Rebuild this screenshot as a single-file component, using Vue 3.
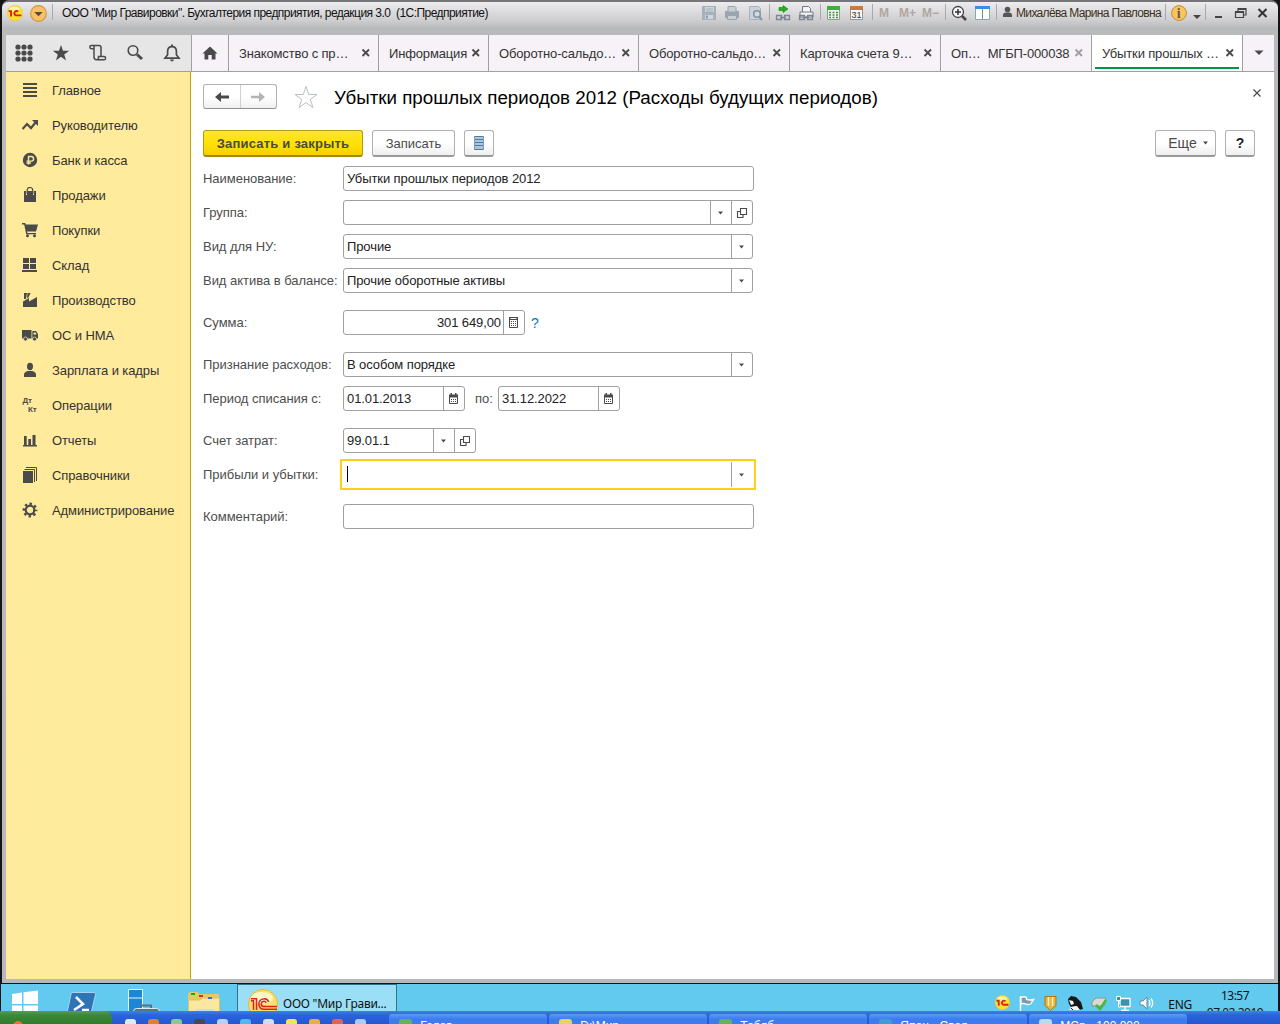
<script setup>
import { ref } from 'vue'

const icons = {
  apps: '<g fill="#4a4a4a"><circle cx="3" cy="3" r="2.6"/><circle cx="9" cy="3" r="2.6"/><circle cx="15" cy="3" r="2.6"/><circle cx="3" cy="9" r="2.6"/><circle cx="9" cy="9" r="2.6"/><circle cx="15" cy="9" r="2.6"/><circle cx="3" cy="15" r="2.6"/><circle cx="9" cy="15" r="2.6"/><circle cx="15" cy="15" r="2.6"/></g>',
  star: '<path fill="#4a4a4a" d="M9 1l2 5.8h6.2l-5 3.6 1.9 6-5.100-3.700-5.100 3.700 1.900-6-5-3.600H7z"/>',
  scroll: '<path fill="none" stroke="#4a4a4a" stroke-width="1.5" d="M4.500 4.800H2.500a1.700 1.700 0 0 1 0-3.400H10q2 0 2 2v9M5 1.800v11q0 3 2.500 3h7.500a1.600 1.600 0 0 0 0-3.200H9.500v1.200q0 2-2 2"/>',
  search: '<circle cx="7" cy="6.500" r="4.800" fill="none" stroke="#4a4a4a" stroke-width="1.600"/><path stroke="#4a4a4a" stroke-width="3" d="M11 10.500l5 4.500"/>',
  bell: '<path fill="none" stroke="#4a4a4a" stroke-width="1.700" d="M2 14.200h14l-2.600-3.500V7.500q0-4.800-4.400-4.800T4.600 7.500v3.200z"/><path fill="#4a4a4a" d="M8 .5h2v2H8zM7 15.500h4q-.5 2-2 2t-2-2z"/>',
  home: '<path fill="#4a4a4a" d="M9 2.500l7.500 7H14.500V15.500H10.700V11H7.300v4.500H3.500V9.500H1.500z"/>',
  back: '<path fill="#4a4a4a" d="M2 9l6-5v3.500h8v3H8V14z"/>',
  forward: '<path fill="#b4b4b4" d="M16 9l-6-5v3.800H2v2.400h8V14z"/>',
  bigStar: '<path fill="#fff" stroke="#b8bfc6" d="M12 1.500l2.700 8h8.300l-6.700 5 2.600 8L12 17.600l-6.900 4.900 2.600-8-6.700-5h8.300z"/>',
  list: '<path fill="#a9c8e0" d="M4 2h10v14H4z"/><path stroke="#54799b" d="M4 2.500h10M4 5.500h10M4 8.500h10M4 11.500h10M4 15.500h10"/><path fill="none" stroke="#7c9dba" d="M4.500 2v14M13.500 2v14"/>',
  caret: '<path fill="#4a4a4a" d="M6 7.500h5L8.500 10.500z"/>',
  open: '<path fill="none" stroke="#4a4a4a" stroke-width="1.100" d="M7.500 4.500h6v6h-6zM7 7.500H4.500v6h5.500V11"/>',
  calc: '<path fill="none" stroke="#4a4a4a" d="M4.500 3.500h8v10h-8z"/><path fill="#4a4a4a" d="M4 3h9v3H4z"/><path stroke="#fff" d="M5.500 4.500h6"/><path stroke="#4a4a4a" stroke-dasharray="1 1" d="M6 7.500h5.500M6 9.500h5.500M6 11.500h5.500"/>',
  calendar: '<path fill="#4a4a4a" d="M4 4.500h9v3H4zM5.500 3H7v2H5.500zM10 3h1.500v2H10z"/><path fill="none" stroke="#4a4a4a" d="M4.500 6v7.500h8V6"/><path stroke="#4a4a4a" stroke-dasharray="1 1" d="M6 9.500h5.500M6 11.500h5.500"/>',
  cross: '<path stroke="#4a4a4a" stroke-width="1.800" d="M5.500 5.500l6.500 6.500M12 5.500L5.500 12"/>',
  close: '<path stroke="#4a4a4a" stroke-width="1.200" d="M5.500 5.500l7 7M12.500 5.500l-7 7"/>',
  more: '<path fill="#4a4a4a" d="M4.500 6.500h9L9 11z"/>',
}

const nav = [
  { label: 'Главное', icon: '<path stroke="#4a4a4a" stroke-width="2" d="M1 2h14M1 6h14M1 10h14M1 14h14"/>' },
  { label: 'Руководителю', icon: '<path fill="none" stroke="#4a4a4a" stroke-width="2.200" d="M.5 12l4.500-5 4 4 5-6"/><path fill="#4a4a4a" d="M10 3h6v6z"/>' },
  { label: 'Банк и касса', icon: '<circle cx="8" cy="8" r="7.200" fill="#4a4a4a"/><path fill="none" stroke="#ffeb9b" stroke-width="1.400" d="M6.500 12.500v-8h2.800a2.300 2.300 0 0 1 0 4.600H4.500M4.500 11h4.500"/>' },
  { label: 'Продажи', icon: '<path fill="#4a4a4a" d="M2 4h2v4h1V4h6v4h1V4h2v11H2z"/><path fill="none" stroke="#4a4a4a" stroke-width="1.200" d="M5.200 7V3.500q0-3 2.800-3t2.800 3V7"/>' },
  { label: 'Покупки', icon: '<path fill="#4a4a4a" d="M0 1h3.200l.6 1.500H16L14 9.500H5l.4 1.500H14v1.200H4.200L2.200 2.400H0z"/><circle cx="5.500" cy="13.700" r="1.500" fill="#4a4a4a"/><circle cx="12.500" cy="13.700" r="1.500" fill="#4a4a4a"/>' },
  { label: 'Склад', icon: '<path fill="#4a4a4a" d="M1 1h6v5H1zM8 1h6v5H8zM1 7h6v5H1zM8 7h6v5H8zM0 13h15v2H0z"/>' },
  { label: 'Производство', icon: '<path fill="#4a4a4a" d="M1 15V9.500L7 6v3.500L15 5v10zM2 1h3L4 7H2zM5.500 1H8.500L6.500 5.500 5 6z"/>' },
  { label: 'ОС и НМА', icon: '<path fill="#4a4a4a" d="M0 3h9.500v8.500H0zM10.300 4H14l2 3v4.500h-5.700z"/><path fill="#ffeb9b" d="M11.500 5.500h2l1.200 2h-3.200z"/><circle cx="3.500" cy="12" r="2" fill="#4a4a4a" stroke="#ffeb9b" stroke-width=".7"/><circle cx="12.500" cy="12" r="2" fill="#4a4a4a" stroke="#ffeb9b" stroke-width=".7"/>' },
  { label: 'Зарплата и кадры', icon: '<ellipse cx="8" cy="4.500" rx="3" ry="3.700" fill="#4a4a4a"/><path fill="#4a4a4a" d="M2 15v-2.500Q2 10 6 9h4q4 1 4 3.500V15z"/>' },
  { label: 'Операции', icon: '<g fill="#4a4a4a" font-family="Liberation Sans" font-size="8" font-weight="bold"><text x="0.500" y="6">Дт</text><text x="6" y="14.500">Кт</text></g>' },
  { label: 'Отчеты', icon: '<path fill="#4a4a4a" d="M1 13h14v1.500H1zM2 4h2.700v9H2zM6.300 7H9v6H6.300zM10.500 3h3v10h-3z"/>' },
  { label: 'Справочники', icon: '<path fill="#4a4a4a" d="M1 4h10v12H1z"/><path fill="none" stroke="#4a4a4a" d="M2.500 2.500h10V15M4 .5h10.500V14"/>' },
  { label: 'Администрирование', icon: '<circle cx="8" cy="8" r="4.300" fill="none" stroke="#4a4a4a" stroke-width="2.200"/><circle cx="8" cy="8" r="6.200" fill="none" stroke="#4a4a4a" stroke-width="2.400" stroke-dasharray="2.400 2.470" stroke-dashoffset="1.200"/>' },
]

const tabs = [
  { label: 'Знакомство с пр…', width: 150 },
  { label: 'Информация', width: 110 },
  { label: 'Оборотно-сальдо…', width: 150 },
  { label: 'Оборотно-сальдо…', width: 151 },
  { label: 'Карточка счета 9…', width: 151 },
  { label: 'Оп…  МГБП-000038', width: 151, dim: true },
  { label: 'Убытки прошлых …', width: 151, active: true },
]

const sep = { kind: 'sep' }
const chain = '<path fill="none" stroke="#7b8590" stroke-width="1.300" d="M1.500 10.500h5v4h-5zM9.500 10.500h5v4h-5zM5 12.500h6"/>'
const tools = [
  { svg: '<path fill="#a5b1bd" d="M1 1h14v14H1z"/><path fill="#cfd6dc" d="M4 2h9v5H4zM4 10h8v4H4z"/><path stroke="#a5b1bd" d="M5 4h7M5 6h7"/><path fill="#8e9ba8" d="M5 10.500h2v3H5z"/>' },
  { svg: '<path fill="#98a4af" d="M1 6h14v7H1z"/><path fill="#c9ced3" stroke="#98a4af" d="M4 1.500h7l1 1V7H4zM3.500 10.500h9v4h-9z"/>' },
  { svg: '<path fill="#cbd1d6" stroke="#a5b1bd" d="M1.500 1.500h9l2 2v11h-11z"/><circle cx="9" cy="9" r="3.300" fill="#d5dadd" stroke="#8494a2" stroke-width="1.600"/><path stroke="#8494a2" stroke-width="2" d="M11 11.500l3 3.500"/>' },
  sep,
  { svg: chain + '<path fill="#24b020" stroke="#148014" stroke-width=".6" d="M4 2.500h4V.5l5 3.500-5 3.500v-2H4z"/>' },
  { svg: '<path fill="#f2f4f6" stroke="#6f7a85" d="M4.500 7V1.500h6l2 2V7M2 12V7h13v5z"/>' + chain },
  sep,
  { svg: '<path fill="#f0f4f0" stroke="#88a088" d="M1.500 1.500h12v13h-12z"/><path fill="#3fae3f" d="M1 1h13v4H1z"/><path stroke="#4b8a4b" stroke-width="1.500" stroke-dasharray="2 1.500" d="M3 7.500h10M3 10h10M3 12.500h10"/>' },
  { svg: '<path fill="#f8f8f8" stroke="#8a96a2" d="M1.500 1.500h12v13h-12z"/><path fill="#c97a3c" d="M1 1h13v4H1z"/><text x="2.500" y="13" font-family="Liberation Sans" font-size="9" fill="#333">31</text>' },
  sep,
  { text: 'M' },
  { text: 'M+' },
  { text: 'M−' },
  sep,
  { svg: '<circle cx="7" cy="7" r="5.500" fill="#f7f7f7" stroke="#444" stroke-width="1.300"/><path stroke="#333" stroke-width="1.500" d="M4 7h6M7 4v6"/><path stroke="#444" stroke-width="2.500" d="M11 11l4 4"/>' },
  { svg: '<path fill="#fff" stroke="#8aa" d="M.5 1.500h14v13H.5z"/><path fill="#3b8ede" d="M0 1h15v3H0z"/><path stroke="#7d8a96" d="M7.500 4v10"/>' },
  sep,
  { svg: '<circle cx="5.500" cy="4.500" r="2.800" fill="#555"/><path fill="#555" d="M1 12V10q0-2 3-2.500h3Q10 8 10 10v2z"/>' },
  { user: 'Михалёва Марина Павловна' },
  sep,
  { svg: '<circle cx="8" cy="8" r="7.400" fill="#f8c560" stroke="#c98a25"/><text x="5.700" y="13" font-family="Liberation Serif" font-size="14" font-weight="bold" fill="#6a5a40">i</text>' },
  { svg: '<path fill="#444" d="M0 10h8l-4 4z"/>' },
  sep,
  { svg: '<path fill="#444" d="M1 11h7v2H1z"/>' },
  { svg: '<path fill="none" stroke="#444" stroke-width="1.200" d="M1.500 6.500h8v6h-8zM4 6V3.500h8V10h-2M4 4.500h8M1.500 7.500h8"/>' },
  { svg: '<path stroke="#333" stroke-width="2" d="M1.500 4l8 8M9.500 4l-8 8"/>' },
]

const form = ref({
  name: 'Убытки прошлых периодов 2012',
  group: '',
  kind: 'Прочие',
  asset: 'Прочие оборотные активы',
  sum: '301 649,00',
  recognition: 'В особом порядке',
  from: '01.01.2013',
  to: '31.12.2022',
  account: '99.01.1',
})

const logoBig = '<circle cx="15" cy="15" r="14.500" fill="#fbdf70" stroke="#e8b63a"/><ellipse cx="14" cy="9" rx="11" ry="6" fill="#fff6c8"/><path fill="none" stroke="#e0201c" stroke-width="1.500" d="M3 11.800h2.500V21M3 9.700h5.500V21M20.800 12.800A5.200 5.200 0 1 0 16 20.300H29M18.200 13.800A2.600 2.600 0 1 0 16 17.600H29"/>'
const logoSmall = '<circle cx="15" cy="15" r="14.500" fill="#f9e22c" stroke="#e6c34a"/><ellipse cx="14" cy="8" rx="10" ry="5" fill="#fdf3a0"/><path fill="none" stroke="#e0200c" stroke-width="3.600" d="M3 11.500h4.500V21.500M21 12.500A4.200 4.200 0 1 0 17 19.500H27"/>'
const launchers = [
  '<path fill="#fff" d="M2 5l10-1.500V15H2zM13.500 3.300L28 1.500V15H13.500zM2 16.500h10V28L2 26.500zM13.500 16.500H28V30l-14.500-1.800z"/>',
  '<path fill="#2f74b5" stroke="#a8d4ee" d="M7 3.500h22q2 0 1.500 2L25 29H1L6 5z"/><path fill="none" stroke="#fff" stroke-width="2.500" d="M11 8l7 7-9 6M17 21h7"/>',
  '<path fill="#1c86d8" stroke="#e4f5fc" d="M2.500.5h14v26h-14z"/><path stroke="#e4f5fc" d="M2 9h15"/><path fill="#587088" stroke="#dcecf5" d="M7.500 22.500q0-3 3-3h20q3 0 3 3V30h-26z"/><path fill="none" stroke="#587088" stroke-width="2" d="M15 19v-2.500h10V19"/>',
  '<path fill="#e8c765" d="M1 6l1.500-3h8L12 5h20v24H1z"/><path fill="#fae7a0" stroke="#e0c064" d="M1.500 11h12l2-2h17v20h-31z"/><path fill="#20a030" d="M4 4h4v2H4z"/><path fill="#d03020" d="M12 6h4v2h-4z"/><path fill="#2080d0" d="M21 8h4v2h-4z"/><path fill="#b9e4ec" d="M9 20h18v9H9z"/>',
]

const tray = [
  '<svg viewBox="0 0 30 30" width="15" height="15">' + logoSmall + '</svg>',
  '<path fill="none" stroke="#fff" stroke-width="1.500" d="M1.500 1v15"/><path fill="#7d9aa8" stroke="#fff" stroke-width="1.300" d="M2 2.500q3-1.500 5.500 0v2q3 1 7 0l-3 4.500q-3 1-4.500 0-3-1-5 0z"/>',
  '<path fill="#e9b33c" stroke="#a87618" d="M2 1.500h11v9l-5.500 5-5.500-5z"/><path stroke="#fff0b4" stroke-width="1.500" d="M5.500 2v9M9.500 2v9"/>',
  '<path fill="#171717" d="M1 4l3-3 5 1 5 5 2 7-4 1-3-4-5 1-2-3z"/><path fill="#f4f4f4" d="M2 5l4 1 1 3-3 1zM4 12l6-1 3 4H2z"/><path stroke="#171717" d="M4 13l2 2"/>',
  '<path fill="#d9d9d4" stroke="#909090" d="M1 7l4-4h10l-2 8H1z"/><path fill="none" stroke="#48b838" stroke-width="2.500" d="M5 10l4 4 6-9"/>',
  '<path fill="#3c90b0" stroke="#fff" stroke-width="1.300" d="M5 3.500h10v8H5zM10 12v3M6 15.500h8"/><path fill="#3c90b0" stroke="#fff" d="M1.500 1.500h4v4h-4zM3.500 6v6H5"/>',
  '<path fill="#f4fafc" stroke="#688b9a" d="M1 6h3l4-4v12l-4-4H1z"/><path fill="none" stroke="#fff" stroke-width="1.300" d="M10 5q2 3 0 6M12 3.500q3.500 4.500 0 9"/>',
]

const hostTasks = [
  { label: 'Голов', color: '#63b35a' },
  { label: 'D:\\Мир', color: '#f0cf60' },
  { label: 'Таблб', color: '#63b35a' },
  { label: 'Япон - Своя', color: '#3f9ad8' },
  { label: 'МСр - 100.000', color: '#b8dcec' },
]
const quick = ['#d8ecfa', '#e0802c', '#8cc890', '#444a52', '#b8d0f4', '#50b8f0', '#d4dcf4', '#f0e850', '#e8b040', '#e86050', '#a8ccf8']
</script>

<template>
  <div class="desktop">
    <div class="window">
      <header class="titlebar">
        <svg class="logo" viewBox="0 0 30 30" v-html="logoSmall" />
        <svg class="menu" viewBox="0 0 16 16">
          <circle cx="8" cy="8" r="7.400" fill="#f8c165" stroke="#cf9440" />
          <path fill="#5a4a38" d="M4 6.500h8l-4 4z" />
        </svg>
        <span class="divider"></span>
        <span class="caption">ООО "Мир Гравировки". Бухгалтерия предприятия, редакция 3.0&nbsp; (1С:Предприятие)</span>
        <div class="tools">
          <template v-for="(t, i) in tools" :key="i">
            <span v-if="t.kind" class="divider"></span>
            <span v-else-if="t.text" class="mem">{{ t.text }}</span>
            <span v-else-if="t.user" class="user">{{ t.user }}</span>
            <svg v-else class="tool" viewBox="0 0 16 16" v-html="t.svg" />
          </template>
        </div>
      </header>

      <div class="app">
        <div class="tabbar">
          <div class="quick">
            <svg v-for="k in ['apps', 'star', 'scroll', 'search', 'bell']" :key="k" class="i18" viewBox="0 0 18 18" v-html="icons[k]" />
          </div>
          <div class="tab home">
            <svg class="i18" viewBox="0 0 18 18" v-html="icons.home" />
          </div>
          <div
            v-for="(t, i) in tabs"
            :key="i"
            class="tab"
            :class="{ active: t.active, dim: t.dim }"
            :style="{ width: t.width + 'px' }"
          >
            <span>{{ t.label }}</span>
            <svg class="i18" viewBox="0 0 18 18" v-html="icons.cross" />
          </div>
          <div class="more">
            <svg class="i18" viewBox="0 0 18 18" v-html="icons.more" />
          </div>
        </div>

        <div class="main">
          <nav>
            <a v-for="n in nav" :key="n.label">
              <svg viewBox="0 0 16 16" v-html="n.icon" />
              <span>{{ n.label }}</span>
            </a>
          </nav>

          <section>
            <div class="head">
              <div class="history">
                <span><svg class="i18" viewBox="0 0 18 18" v-html="icons.back" /></span>
                <span><svg class="i18" viewBox="0 0 18 18" v-html="icons.forward" /></span>
              </div>
              <svg class="fav" viewBox="0 0 24 24" v-html="icons.bigStar" />
              <h1>Убытки прошлых периодов 2012 (Расходы будущих периодов)</h1>
              <svg class="i18 close" viewBox="0 0 18 18" v-html="icons.close" />
            </div>

            <div class="commands">
              <button class="btn primary">Записать и закрыть</button>
              <button class="btn save">Записать</button>
              <button class="btn square"><svg class="i18" viewBox="0 0 18 18" v-html="icons.list" /></button>
              <span class="grow"></span>
              <button class="btn all">Еще <svg class="i18" viewBox="0 0 18 18" v-html="icons.caret" /></button>
              <button class="btn square help">?</button>
            </div>

            <div class="form">
              <div class="row">
                <label>Наименование:</label>
                <div class="field wide"><span class="value">{{ form.name }}</span></div>
              </div>
              <div class="row">
                <label>Группа:</label>
                <div class="field">
                  <span class="value">{{ form.group }}</span>
                  <i><svg class="i18" viewBox="0 0 18 18" v-html="icons.caret" /></i>
                  <i><svg class="i18" viewBox="0 0 18 18" v-html="icons.open" /></i>
                </div>
              </div>
              <div class="row">
                <label>Вид для НУ:</label>
                <div class="field">
                  <span class="value">{{ form.kind }}</span>
                  <i><svg class="i18" viewBox="0 0 18 18" v-html="icons.caret" /></i>
                </div>
              </div>
              <div class="row">
                <label>Вид актива в балансе:</label>
                <div class="field">
                  <span class="value">{{ form.asset }}</span>
                  <i><svg class="i18" viewBox="0 0 18 18" v-html="icons.caret" /></i>
                </div>
              </div>
              <div class="row group">
                <label>Сумма:</label>
                <div class="field sum">
                  <span class="value">{{ form.sum }}</span>
                  <i><svg class="i18" viewBox="0 0 18 18" v-html="icons.calc" /></i>
                </div>
                <a class="hint">?</a>
              </div>
              <div class="row group">
                <label>Признание расходов:</label>
                <div class="field">
                  <span class="value">{{ form.recognition }}</span>
                  <i><svg class="i18" viewBox="0 0 18 18" v-html="icons.caret" /></i>
                </div>
              </div>
              <div class="row">
                <label>Период списания с:</label>
                <div class="field date">
                  <span class="value">{{ form.from }}</span>
                  <i><svg class="i18" viewBox="0 0 18 18" v-html="icons.calendar" /></i>
                </div>
                <label class="to">по:</label>
                <div class="field date">
                  <span class="value">{{ form.to }}</span>
                  <i><svg class="i18" viewBox="0 0 18 18" v-html="icons.calendar" /></i>
                </div>
              </div>
              <div class="row group">
                <label>Счет затрат:</label>
                <div class="field account">
                  <span class="value">{{ form.account }}</span>
                  <i><svg class="i18" viewBox="0 0 18 18" v-html="icons.caret" /></i>
                  <i><svg class="i18" viewBox="0 0 18 18" v-html="icons.open" /></i>
                </div>
              </div>
              <div class="row">
                <label>Прибыли и убытки:</label>
                <div class="field focused">
                  <span class="value"><b class="cursor"></b></span>
                  <i><svg class="i18" viewBox="0 0 18 18" v-html="icons.caret" /></i>
                </div>
              </div>
              <div class="row group">
                <label>Комментарий:</label>
                <div class="field wide"><span class="value"></span></div>
              </div>
            </div>
          </section>
        </div>
      </div>
    </div>

    <footer class="taskbar">
      <div class="launchers">
        <svg v-for="(l, i) in launchers" :key="i" viewBox="0 0 34 30" v-html="l" />
      </div>
      <div class="task">
        <svg viewBox="0 0 30 30" v-html="logoBig" />
        <span>ООО "Мир Грави...</span>
      </div>
      <div class="tray">
        <svg v-for="(t, i) in tray" :key="i" viewBox="0 0 17 17" v-html="t" />
      </div>
      <span class="lang">ENG</span>
      <div class="clock">
        <div>13:57</div>
        <div>07.02.2019</div>
      </div>
    </footer>

    <footer class="host">
      <div class="start"><span></span></div>
      <div class="quick-launch">
        <span v-for="c in quick" :key="c" :style="{ background: c }"></span>
      </div>
      <div class="host-tasks">
        <div v-for="t in hostTasks" :key="t.label" class="host-task">
          <span class="dot" :style="{ background: t.color }"></span>
          {{ t.label }}
        </div>
      </div>
    </footer>
  </div>
</template>

<style>
body {
  margin: 0;
  background: #000;
}
</style>

<style scoped>
.desktop {
  width: 1280px;
  height: 1024px;
  overflow: hidden;
  display: flex;
  flex-direction: column;
  background: #151515;
  font-family: 'Liberation Sans', Arial, sans-serif;
  font-size: 13px;
  color: #333;
}

svg {
  display: block;
  flex: none;
}

.i18 {
  width: 18px;
  height: 18px;
}

.window {
  box-sizing: border-box;
  height: 983px;
  margin: 0 2px 1px;
  padding: 0 4px 4px;
  display: flex;
  flex-direction: column;
  border-top: 2px solid #77747a;
  border-radius: 7px 7px 0 0;
  background: linear-gradient(#ececee, #cfcfd1 18px, #b9babc 26px, #b7b8bb);
  flex: none;
}

.titlebar {
  height: 33px;
  display: flex;
  align-items: flex-start;
  flex: none;
}

.logo {
  width: 16px;
  height: 16px;
  margin: 3px 0 0 1px;
}

.menu {
  width: 17px;
  height: 17px;
  margin: 3px 0 0 7px;
}

.divider {
  width: 1px;
  height: 16px;
  margin-top: 2px;
  background: #a9a9ac;
}

.menu + .divider {
  margin-left: 5px;
}

.caption {
  width: 639px;
  margin-left: 9px;
  font-size: 12px;
  line-height: 22px;
  letter-spacing: -0.54px;
  color: #111;
  white-space: pre;
}

.tools {
  display: grid;
  grid-template-columns:
    23px 24px 21px 6px 23px 22px 6px 23px 23px 7px 20px 23px 23px
    6px 24px 21px 6px 14px 149px 6px 22px 12px 9px 20px 23px 13px;
  line-height: 22px;
}

.tool {
  width: 16px;
  height: 16px;
  margin-top: 3px;
}

.mem {
  font-size: 12px;
  font-weight: bold;
  color: #b0a69e;
}

.user {
  font-size: 12px;
  letter-spacing: -0.66px;
  color: #3c3020;
  white-space: nowrap;
}

.app {
  flex: 1;
  display: flex;
  flex-direction: column;
  background: #fff;
}

.tabbar {
  box-sizing: border-box;
  height: 37px;
  display: flex;
  border-bottom: 1px solid #a0a0a0;
  background: #f6f2f7;
}

.quick {
  box-sizing: border-box;
  width: 186px;
  padding: 0 10px 0 9px;
  display: flex;
  align-items: center;
  justify-content: space-between;
  background: #e6e6e6;
  border-right: 1px solid #a0a0a0;
}

.tab {
  box-sizing: border-box;
  padding: 0 3px 0 10px;
  display: flex;
  align-items: center;
  justify-content: space-between;
  border-right: 1px solid #a0a0a0;
  letter-spacing: -0.15px;
  white-space: pre;
}

.tab.home {
  width: 37px;
  padding: 0 9px;
}

.tab.active {
  background: linear-gradient(#009646, #009646) 3px 32px / 144px 2px no-repeat #fff;
}

.tab.dim svg {
  opacity: 0.5;
}

.more {
  width: 31px;
  display: flex;
  align-items: center;
  justify-content: center;
}

.main {
  flex: 1;
  display: flex;
}

nav {
  box-sizing: border-box;
  width: 185px;
  padding-top: 1px;
  background: #ffeb9b;
  border-right: 1px solid #c4a313;
}

nav a {
  height: 35px;
  padding-left: 16px;
  display: flex;
  align-items: center;
  gap: 14px;
  letter-spacing: -0.1px;
}

nav svg {
  width: 16px;
  height: 16px;
  margin-top: -1px;
}

section {
  flex: 1;
  padding: 12px 19px 0 12px;
}

.head {
  height: 25px;
  display: flex;
}

.history {
  box-sizing: border-box;
  width: 74px;
  height: 25px;
  display: flex;
  border: 1px solid #b0b0b0;
  border-bottom-color: #909090;
  border-radius: 3px;
  background: linear-gradient(#fff 50%, #f0f0f0);
}

.history span {
  flex: 1;
  display: flex;
  align-items: center;
  justify-content: center;
}

.history span + span {
  border-left: 1px solid #d0d0d0;
}

.fav {
  width: 24px;
  height: 24px;
  margin: 1px 0 0 17px;
}

h1 {
  flex: 1;
  margin: 0 0 0 16px;
  font-size: 18.75px;
  font-weight: normal;
  line-height: 27px;
  color: #000;
}

.close {
  margin-right: -11px;
}

.commands {
  height: 27px;
  margin-top: 21px;
  display: flex;
  gap: 9px;
}

.btn {
  box-sizing: border-box;
  height: 27px;
  padding: 0;
  display: flex;
  align-items: center;
  justify-content: center;
  border: 1px solid #b0b0b0;
  border-bottom: 2px solid #999;
  border-radius: 3px;
  background: linear-gradient(#fff 50%, #efefef);
  font: 13px 'Liberation Sans', Arial, sans-serif;
  letter-spacing: 0;
  color: #4a4a4a;
}

.btn.primary {
  width: 160px;
  border-color: #b59b10;
  border-bottom-color: #9c8718;
  background: linear-gradient(#ffe62e, #ffdf00 60%, #f4d000);
  font-weight: bold;
  letter-spacing: 0.2px;
}

.save {
  width: 83px;
}

.square {
  width: 30px;
}

.btn.help {
  font-size: 14px;
  font-weight: bold;
  color: #222;
}

.btn.all {
  width: 61px;
  padding-left: 12px;
  font-size: 14px;
}

.grow {
  flex: 1;
}

.form {
  margin-top: 9px;
  display: flex;
  flex-direction: column;
  gap: 9px;
}

.row {
  height: 25px;
  display: flex;
  align-items: center;
}

.row.group {
  margin-top: 8px;
}

label {
  width: 140px;
  letter-spacing: -0.03px;
  color: #4d4d4d;
  white-space: nowrap;
}

label.to {
  width: 23px;
  margin-left: 10px;
}

.field {
  box-sizing: border-box;
  width: 410px;
  height: 25px;
  display: flex;
  border: 1px solid #a0a0a0;
  border-radius: 3px;
  background: #fff;
}

.field.wide {
  width: 411px;
}

.field.sum {
  width: 182px;
}

.sum .value {
  text-align: right;
}

.field.date {
  width: 122px;
}

.field.account {
  width: 133px;
}

.field.focused {
  width: 416px;
  height: 31px;
  margin: 0 -3px;
  padding: 1px 2px 1px 1px;
  border: 2px solid #ffcf1a;
  border-radius: 0;
}

.value {
  flex: 1;
  padding: 0 2px 0 3px;
  line-height: 23px;
  letter-spacing: -0.1px;
  color: #222;
}

.cursor {
  display: block;
  width: 1px;
  height: 16px;
  margin: 4px 0 0 1px;
  background: #000;
}

i {
  width: 20px;
  display: flex;
  align-items: center;
  justify-content: center;
  border-left: 1px solid #a0a0a0;
}

.hint {
  margin-left: 6px;
  font-size: 14px;
  color: #0a78c0;
}

.taskbar {
  height: 27px;
  margin: 0 2px 0 1px;
  display: flex;
  overflow: hidden;
  background: #62caee;
  flex: none;
}

.launchers {
  width: 236px;
  padding-left: 9px;
  box-sizing: border-box;
  display: grid;
  grid-template-columns: 55px 61px 61px 40px;
}

.launchers svg {
  width: 34px;
  height: 30px;
  margin-top: 5px;
}

.task {
  box-sizing: border-box;
  width: 160px;
  height: 32px;
  padding-left: 10px;
  display: flex;
  gap: 5px;
  border: 1px solid #31728b;
  background: #9bdff7;
  font-family: 'Noto Sans', sans-serif;
  font-size: 12px;
  line-height: 37px;
  letter-spacing: -0.25px;
  color: #111;
  white-space: nowrap;
}

.task svg {
  width: 30px;
  height: 30px;
  margin-top: 4px;
}

.tray {
  margin-left: auto;
  padding-top: 11px;
  display: flex;
  gap: 7px;
}

.tray svg {
  width: 17px;
  height: 17px;
}

.lang,
.clock {
  font-family: 'Noto Sans', sans-serif;
  font-size: 12px;
  color: #111;
}

.lang {
  margin-left: 12px;
  line-height: 41px;
  letter-spacing: -0.3px;
}

.clock {
  width: 86px;
  padding-top: 3px;
  line-height: 17px;
  text-align: center;
  letter-spacing: -0.5px;
}

.host {
  height: 13px;
  display: flex;
  overflow: hidden;
  background: linear-gradient(#3a82ea, #2a63dc 4px, #2458d4);
  flex: none;
}

.start {
  width: 112px;
  border-radius: 0 8px 0 0;
  background: linear-gradient(#5b9c58, #3a8a38 4px, #2f7c2d);
}

.start span {
  display: block;
  width: 10px;
  height: 10px;
  margin: 10px 0 0 13px;
  border-radius: 5px;
  background: #ee7030;
}

.quick-launch {
  width: 277px;
  padding: 8px 0 0 13px;
  box-sizing: border-box;
  display: flex;
  gap: 12px;
}

.quick-launch span {
  width: 11px;
  height: 12px;
  border-radius: 3px 3px 0 0;
}

.host-tasks {
  display: flex;
  gap: 2px;
}

.host-task {
  box-sizing: border-box;
  width: 158px;
  height: 20px;
  margin-top: 3px;
  padding: 5px 0 0 10px;
  display: flex;
  gap: 5px;
  border-radius: 3px 3px 0 0;
  background: linear-gradient(#5d9cf7, #3c7cee 5px);
  font-size: 12px;
  line-height: 15px;
  color: #fff;
  white-space: pre;
}

.dot {
  width: 13px;
  height: 12px;
  border-radius: 3px;
}
</style>
